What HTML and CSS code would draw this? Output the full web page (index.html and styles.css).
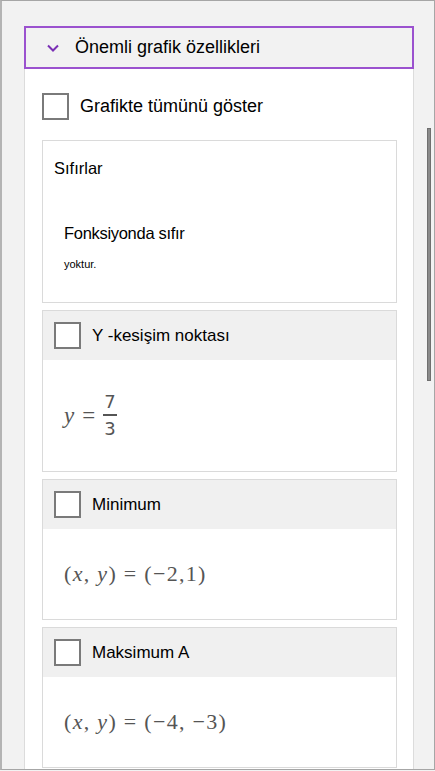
FILE: index.html
```html
<!DOCTYPE html>
<html lang="tr">
<head>
    <meta charset="UTF-8">
    <meta name="viewport" content="width=device-width, initial-scale=1.0">
    <title>Önemli grafik özellikleri</title>
    <link rel="stylesheet" href="styles.css">
</head>
<body>
    <div class="pane">
        <div class="section-header">
            <svg class="chevron" width="12" height="8" viewBox="0 0 12 8">
                <path d="M1 1.5 L6 6.5 L11 1.5" fill="none" stroke="#7a2fb5" stroke-width="2"/>
            </svg>
            <span>Önemli grafik özellikleri</span>
        </div>
        <div class="section-body">
            <label class="show-all">
                <span class="checkbox"></span>
                <span>Grafikte tümünü göster</span>
            </label>

            <div class="card">
                <div class="plain-title">Sıfırlar</div>
                <div class="zero-text">
                    <div class="zero-main">Fonksiyonda sıfır</div>
                    <div class="zero-small">yoktur.</div>
                </div>
            </div>

            <div class="card">
                <div class="card-head">
                    <span class="checkbox"></span>
                    <span>Y -kesişim noktası</span>
                </div>
                <div class="card-math">
                    <span class="mi">y</span>
                    <span class="mo">=</span>
                    <span class="frac">
                        <span class="num">7</span>
                        <span class="den">3</span>
                    </span>
                </div>
            </div>

            <div class="card">
                <div class="card-head">
                    <span class="checkbox"></span>
                    <span>Minimum</span>
                </div>
                <div class="card-math point">(<i>x</i>, <i>y</i>) = (−2,1)</div>
            </div>

            <div class="card">
                <div class="card-head">
                    <span class="checkbox"></span>
                    <span>Maksimum A</span>
                </div>
                <div class="card-math point">(<i>x</i>, <i>y</i>) = (−4, −3)</div>
            </div>
        </div>
        <div class="scroll-thumb"></div>
    </div>
</body>
</html>
```

FILE: styles.css
```css
* {
    box-sizing: border-box;
}
body {
    margin: 0;
    padding: 0;
    background-color: #f2f2f2;
    font-family: "Liberation Sans", Arial, sans-serif;
    color: #000;
}
.pane {
    position: relative;
    width: 435px;
    height: 770px;
    overflow: hidden;
    border: 1px solid #a6a6a6;
    border-left: 2px solid #b4b4b4;
    padding: 25px 20px 0 22px;
    background-color: #f2f2f2;
}
.section-header {
    display: flex;
    align-items: center;
    height: 43px;
    border: 2px solid #9b52cf;
    padding-left: 21px;
    font-size: 18px;
    background-color: #f2f2f2;
}
.chevron {
    margin-right: 16px;
}
.section-body {
    background: #ffffff;
    border-left: 1px solid #dcdcdc;
    border-right: 1px solid #dcdcdc;
    padding: 24px 16px 0 17px;
    height: 720px;
}
.show-all {
    display: flex;
    align-items: center;
    font-size: 18px;
    margin-bottom: 20px;
}
.checkbox {
    display: inline-block;
    width: 27px;
    height: 27px;
    border: 2px solid #7a7a7a;
    background: #ffffff;
    margin-right: 11px;
    flex-shrink: 0;
}
.card {
    border: 1px solid #dadada;
    background: #ffffff;
    margin-bottom: 7px;
}
.plain-title {
    font-size: 16.5px;
    line-height: 19px;
    padding: 18px 0 0 11px;
}
.zero-text {
    padding: 46px 0 31px 21px;
}
.zero-main {
    font-size: 16.5px;
    line-height: 19px;
    letter-spacing: -0.3px;
}
.zero-small {
    font-size: 11px;
    line-height: 13px;
    margin-top: 15px;
}
.card-head {
    display: flex;
    align-items: center;
    height: 49px;
    padding-left: 11px;
    background-color: #f0f0f0;
    font-size: 17px;
}
.card-math {
    display: flex;
    align-items: center;
    height: 111px;
    padding-left: 21px;
    color: #555555;
    font-family: "Liberation Serif", "Times New Roman", serif;
    font-size: 23px;
    white-space: pre;
}
.card-math.point {
    height: 90px;
    font-size: 22px;
    letter-spacing: 1.3px;
}
.mi {
    font-style: italic;
    margin-right: 8px;
}
.mo {
    margin-right: 8px;
}
.frac {
    display: inline-flex;
    flex-direction: column;
    align-items: center;
    font-family: "DejaVu Sans", sans-serif;
    font-size: 18px;
    line-height: 1;
}
.num {
    padding: 0 1px 3px;
    border-bottom: 2px solid #555555;
}
.den {
    padding-top: 4px;
}
.scroll-thumb {
    position: absolute;
    top: 127px;
    left: 425px;
    width: 4px;
    height: 253px;
    background: #8a8a8a;
    border: 1px solid #6f6f6f;
}
```
